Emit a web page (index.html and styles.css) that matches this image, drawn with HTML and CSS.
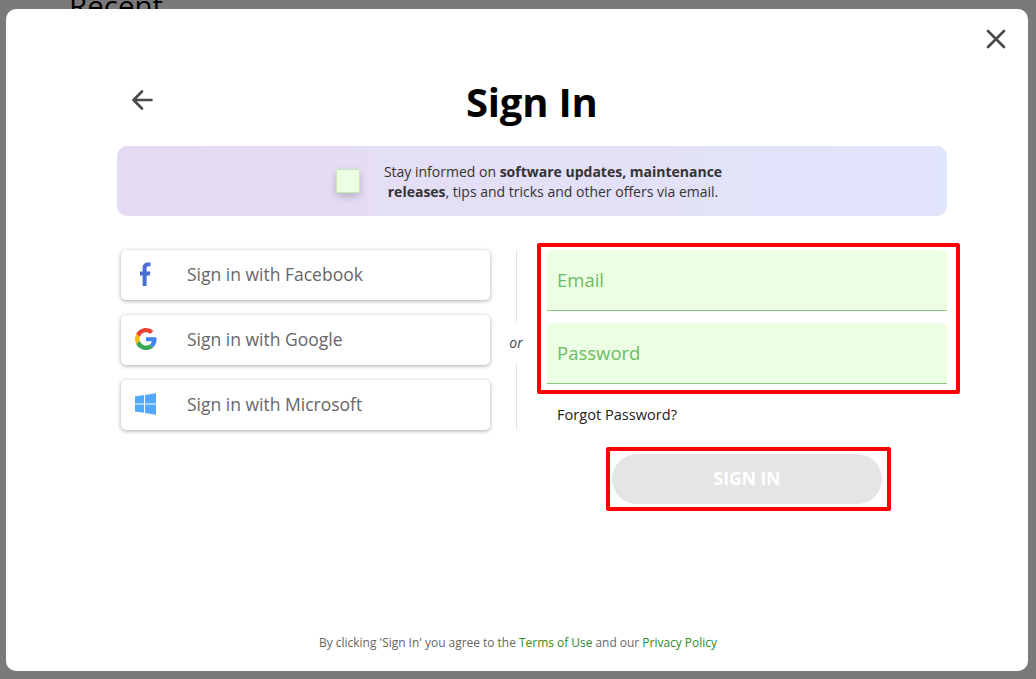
FILE: index.html
```html
<!DOCTYPE html>
<html lang="en">
<head>
    <meta charset="UTF-8">
    <meta name="viewport" content="width=device-width, initial-scale=1.0">
    <title>Sign In</title>
    <link rel="stylesheet" href="styles.css">
</head>
<body>
    <h2 class="page-title">Recent</h2>
    <div class="overlay">
        <div class="modal">
            <button class="close-btn" aria-label="Close">
                <svg width="20" height="20" viewBox="0 0 20 20"><path d="M2 2L18 18M18 2L2 18" fill="none" stroke="#4a4a4a" stroke-width="2.7" stroke-linecap="round"/></svg>
            </button>
            <div class="modal-head">
                <button class="back-btn" aria-label="Back">
                    <svg width="22" height="22" viewBox="0 0 22 22"><path d="M20.500 11H2.500M11 2.500L2.500 11L11 19.500" fill="none" stroke="#4a4a4a" stroke-width="2.6" stroke-linecap="round" stroke-linejoin="round"/></svg>
                </button>
                <h1>Sign In</h1>
            </div>
            <div class="banner">
                <span class="check"></span>
                <p>Stay informed on <b>software updates, maintenance<br>releases</b>, tips and tricks and other offers via email.</p>
            </div>
            <div class="columns">
                <div class="socials">
                    <button class="social">
                        <span class="social-icon">
                            <svg width="12" height="24" viewBox="0.800 0 12 22" preserveAspectRatio="none"><path d="M3.400 22V12.400H0.600V8.600H3.400V5.800C3.400 2.300 5.400 0.400 8.400 0.400C9.700 0.400 11 0.600 11.400 0.700V4H9.400C7.800 4 7.400 4.800 7.400 6V8.600H11.200L10.600 12.400H7.400V22Z" fill="#4a6fd4"/></svg>
                        </span>
                        Sign in with Facebook
                    </button>
                    <button class="social">
                        <span class="social-icon">
                            <svg width="22" height="22" viewBox="0 0 48 48">
                                <path fill="#EA4335" d="M24 9.500c3.500 0 6.700 1.200 9.200 3.600l6.900-6.900C35.900 2.400 30.500 0 24 0 14.600 0 6.500 5.400 2.600 13.200l8 6.200C12.500 13.600 17.800 9.500 24 9.500z"/>
                                <path fill="#4285F4" d="M47 24.500c0-1.600-.1-3.100-.4-4.500H24v9h12.900c-.6 3-2.200 5.500-4.700 7.200l7.700 6c4.500-4.200 7.100-10.300 7.100-17.700z"/>
                                <path fill="#FBBC05" d="M10.600 28.600c-.5-1.400-.8-3-.8-4.600s.3-3.200.8-4.600l-8-6.200C.9 16.500 0 20.100 0 24s.9 7.500 2.600 10.800l8-6.200z"/>
                                <path fill="#34A853" d="M24 48c6.500 0 11.900-2.100 15.900-5.800l-7.700-6c-2.200 1.400-4.900 2.300-8.200 2.300-6.200 0-11.500-4.100-13.400-9.900l-8 6.200C6.500 42.600 14.600 48 24 48z"/>
                            </svg>
                        </span>
                        Sign in with Google
                    </button>
                    <button class="social">
                        <span class="social-icon">
                            <svg width="22" height="22" viewBox="0 0 22 22"><path d="M0 3.400L9 2.100V10.400H0ZM10 2L21 0.300V10.400H10ZM0 11.500H9V19.800L0 18.500ZM10 11.500H21V21.700L10 20Z" fill="#52aaff"/></svg>
                        </span>
                        Sign in with Microsoft
                    </button>
                </div>
                <div class="divider">
                    <span class="divider-line divider-top"></span>
                    <em>or</em>
                    <span class="divider-line"></span>
                </div>
                <div class="form-col">
                    <div class="marked fields">
                        <div class="field">Email</div>
                        <div class="field">Password</div>
                    </div>
                    <a class="forgot" href="#">Forgot Password?</a>
                    <div class="marked submit">
                        <button class="signin-btn">SIGN IN</button>
                    </div>
                </div>
            </div>
            <p class="terms">By clicking 'Sign In' you agree to the <a href="#">Terms of Use</a> and our <a href="#">Privacy Policy</a></p>
        </div>
    </div>
</body>
</html>
```
FILE: styles.css
```css
* {
    box-sizing: border-box;
}
body {
    margin: 0;
    height: 100vh;
    overflow: hidden;
    background-color: #fff;
    font-family: "Open Sans", "Noto Sans", sans-serif;
}
button {
    font-family: inherit;
    cursor: pointer;
}
.page-title {
    margin: -15px 0 0 69px;
    font-size: 29.5px;
    font-weight: 400;
    color: #000;
}
.overlay {
    position: fixed;
    inset: 0;
    padding: 9px 8px 8px 6px;
    background-color: rgba(0, 0, 0, 0.52);
}
.modal {
    position: relative;
    display: flex;
    flex-direction: column;
    height: 100%;
    padding: 0 81px 0 111px;
    background-color: #fff;
    border-radius: 10px;
}
.close-btn {
    position: absolute;
    top: 20px;
    right: 22px;
    display: flex;
    padding: 0;
    background: none;
    border: none;
}
.modal-head {
    display: flex;
    align-items: center;
    height: 137px;
    padding-top: 46px;
}
.back-btn {
    display: flex;
    margin: 0 0 2px 14px;
    padding: 0;
    background: none;
    border: none;
}
.modal-head h1 {
    margin: 1px 0 0 313px;
    font-size: 40px;
    font-weight: 700;
    letter-spacing: -0.2px;
    color: #000;
}
.banner {
    display: flex;
    align-items: center;
    justify-content: center;
    gap: 24px;
    height: 70px;
    padding-right: 6px;
    background: linear-gradient(90deg, #e5daf3, #e1e5fb);
    border-radius: 10px;
}
.check {
    width: 24px;
    height: 24px;
    background-color: #ecfee3;
    border: 1px solid #c5eab5;
    border-radius: 2px;
    box-shadow: 0 4px 8px rgba(0, 0, 0, 0.2);
}
.banner p {
    margin: 2px 0 0;
    font-size: 14px;
    line-height: 20px;
    text-align: center;
    color: #333;
}
.columns {
    display: flex;
    margin: 27px -13px 0 0;
}
.socials {
    display: flex;
    flex: none;
    flex-direction: column;
    gap: 15px;
    width: 369px;
    margin: 7px 0 0 4px;
}
.social {
    display: flex;
    align-items: center;
    height: 50px;
    padding: 0 0 2px;
    font-size: 17.5px;
    color: #666;
    background-color: #fff;
    border: none;
    border-radius: 5px;
    box-shadow: 0 1px 4px rgba(0, 0, 0, 0.35);
}
.social-icon {
    display: flex;
    justify-content: center;
    flex: none;
    width: 50px;
    margin-right: 16px;
}
.divider {
    display: flex;
    flex: none;
    flex-direction: column;
    align-items: center;
    width: 47px;
    height: 180px;
    margin-top: 7px;
    padding-left: 5px;
}
.divider-line {
    flex: 1;
    width: 1px;
    background-color: #e2e2e2;
}
.divider-top {
    flex: none;
    height: 72px;
}
.divider em {
    font-size: 14px;
    font-weight: 500;
    line-height: 41px;
    color: #444;
}
.form-col {
    display: flex;
    flex: none;
    flex-direction: column;
    width: 423px;
}
.marked {
    border: 4px solid #f00;
    border-radius: 2px;
}
.fields {
    display: flex;
    flex-direction: column;
    gap: 12px;
    padding: 3px 9px 6px 6px;
}
.field {
    height: 61px;
    padding-left: 10px;
    font-size: 18.5px;
    line-height: 60px;
    color: #6dbb62;
    background-color: #ecfee3;
    border-bottom: 1px solid #86c97a;
    border-radius: 5px 5px 0 0;
}
.forgot {
    margin: 10px 0 0 20px;
    font-size: 14.6px;
    line-height: 20px;
    color: #222;
    text-decoration: none;
}
.submit {
    align-self: flex-start;
    width: 285px;
    height: 64px;
    margin: 23px 0 0 69px;
    padding: 3px 0 0 2px;
}
.signin-btn {
    display: block;
    width: 270px;
    height: 50px;
    padding: 0 0 2px;
    font-size: 17.5px;
    font-weight: 700;
    color: #fff;
    background-color: #e5e5e5;
    border: none;
    border-radius: 25px;
}
.terms {
    margin: auto 0 19px -28px;
    font-size: 11.95px;
    line-height: 18px;
    text-align: center;
    color: #666;
}
.terms a {
    color: #2e8b1e;
    text-decoration: none;
}
```
